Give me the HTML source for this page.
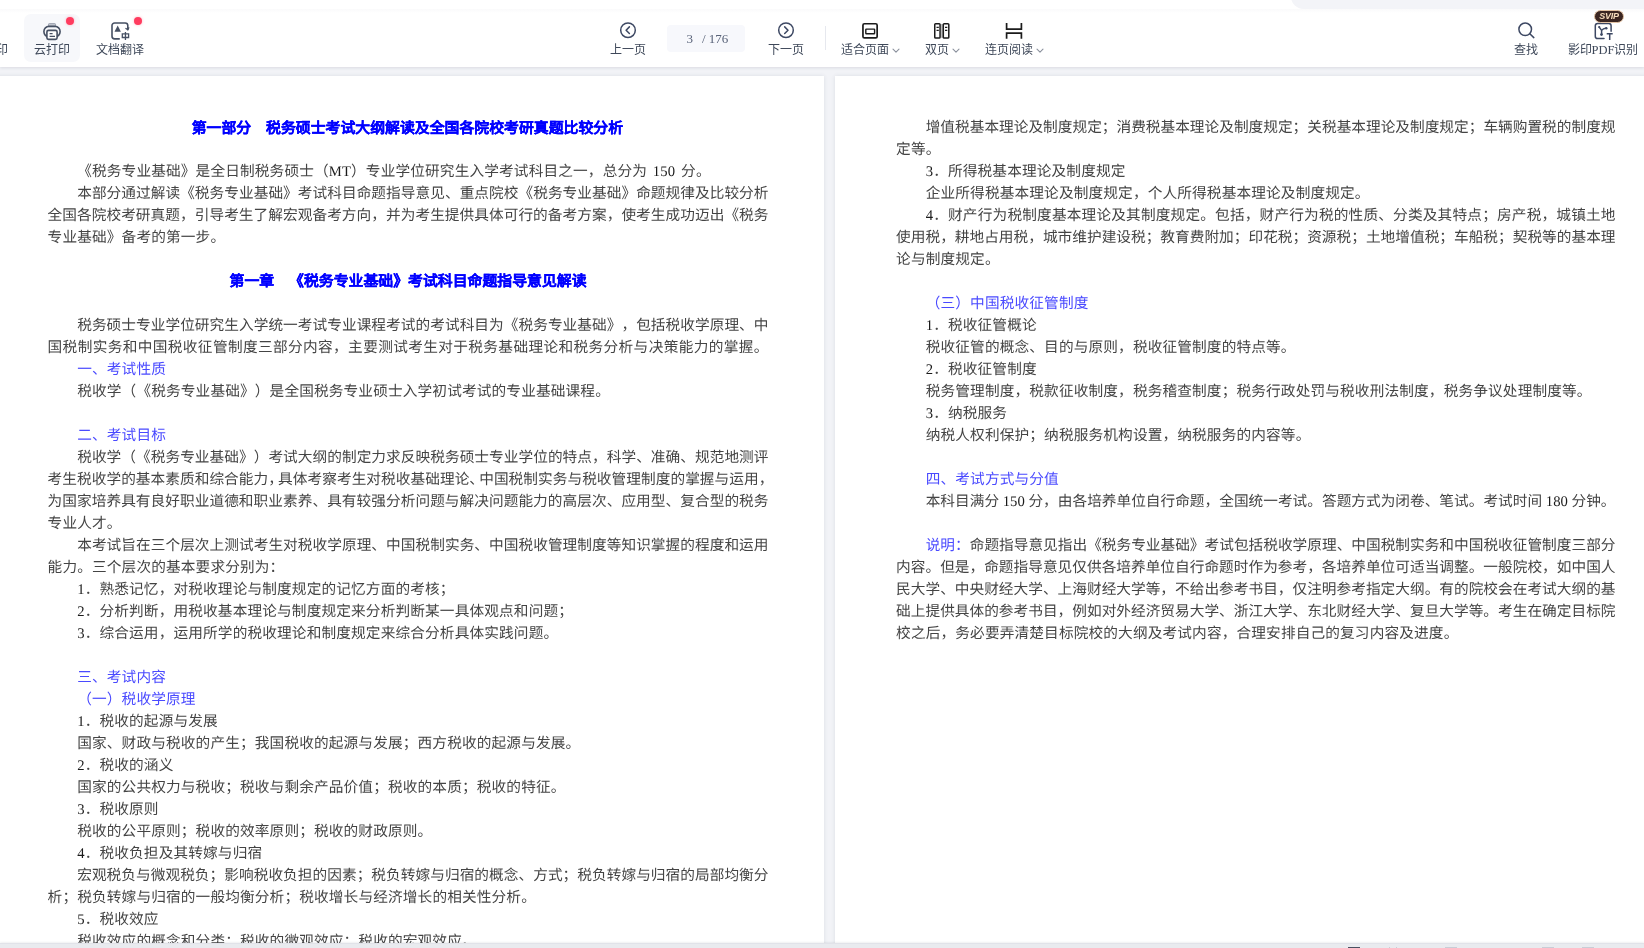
<!DOCTYPE html>
<html lang="zh-CN">
<head>
<meta charset="utf-8">
<title>PDF</title>
<style>
html,body{margin:0;padding:0;}
body{width:1644px;height:948px;overflow:hidden;background:#f2f3f7;font-family:"Liberation Sans",sans-serif;}
#app{position:relative;width:1644px;height:948px;overflow:hidden;background:#f2f3f7;}
.pg{position:absolute;top:76px;height:880px;background:#fff;box-shadow:0 0 4px rgba(60,70,90,.12);}
#pgL{left:-10px;width:834px;}
#pgR{left:835px;width:820px;}
#doc{will-change:transform;position:absolute;left:0;top:0;width:1644px;height:943px;overflow:hidden;font-family:"Liberation Serif",serif;font-size:14.67px;line-height:22px;color:#444;text-spacing-trim:space-all;text-rendering:geometricPrecision;}
.l{position:absolute;white-space:nowrap;height:22px;letter-spacing:0.143px;word-spacing:2px;}
.j{text-align:justify;text-align-last:justify;white-space:nowrap;letter-spacing:0;word-spacing:0;}
.b{color:#4a4aff;}
.n{color:#1a1a1a;}
.l i{font-style:normal;display:inline-block;width:.667em;}
.t{position:absolute;height:22px;text-align:center;white-space:nowrap;font-family:"Liberation Sans",sans-serif;font-weight:bold;color:#0000ff;font-size:14.88px;-webkit-text-stroke:0.25px #0000ff;}
#tb{position:absolute;left:0;top:0;width:1644px;height:67px;background:#fff;box-shadow:0 1px 3px rgba(40,50,70,.12);font-size:12px;color:#3d4757;}
#topstrip{position:absolute;left:1290.5px;top:-15px;width:360px;height:24px;background:#f3f4f8;border-bottom-left-radius:12.5px;}
#topline{position:absolute;left:0;top:9px;width:1644px;height:4px;background:linear-gradient(#fafafb,#fff);}
.hov{position:absolute;left:24px;top:14px;width:56px;height:47.5px;border-radius:7px;background:#f7f8fb;}
.btn{position:absolute;top:0;width:60px;height:67px;}
.btn .ic{position:absolute;}
.lb{position:absolute;left:-20px;width:100px;top:41.9px;height:17px;line-height:17px;text-align:center;white-space:nowrap;font-size:12px;color:#3e4859;}
.lb em{font-style:normal;font-family:"Liberation Serif",serif;font-size:12.5px;}
.lc{text-align:left;}
.cv{display:inline-block;margin-left:2.7px;vertical-align:0.4px;}
.dot{position:absolute;top:17px;width:8px;height:8px;border-radius:50%;background:#ff3c5f;box-shadow:0 0 3px rgba(255,60,95,.35);}
#pbox{position:absolute;left:667px;top:25px;width:78px;height:27px;border-radius:4px;background:#f7f8fc;font-family:"Liberation Serif",serif;font-size:13px;color:#586278;}
#pbox span{position:absolute;top:5px;line-height:17px;white-space:nowrap;}
#sep{position:absolute;left:825px;top:26px;width:1px;height:24px;background:#e6e8ee;}
.svip{position:absolute;left:21px;top:9.9px;width:28px;height:11.6px;border-radius:7px;background:#3b2622;border:1px solid #e3c3a4;text-align:center;line-height:11.6px;}
.svip b{font-size:9px;font-style:italic;color:#f6dcbc;letter-spacing:-0.3px;position:relative;top:-0.5px;}
#status{position:absolute;left:0;top:943px;width:1644px;height:5px;background:#e9ebef;border-top:1px solid #e1e3e9;box-sizing:border-box;box-shadow:0 -1px 2px rgba(40,50,70,.07);}
#status i{position:absolute;top:3px;height:1px;background:#c9cdd6;}
</style>
</head>
<body>
<div id="app">
<div id="pgL" class="pg"></div>
<div id="pgR" class="pg"></div>
<div id="doc">
<div class="t" style="left:47.00px;width:720.90px;top:117.60px">第一部分　税务硕士考试大纲解读及全国各院校考研真题比较分析</div>
<div class="t" style="left:47.60px;width:720.90px;top:270.90px">第一章　《税务专业基础》考试科目命题指导意见解读</div>
<div class="l" style="left:77.20px;top:161.40px;">《税务专业基础》是全日制税务硕士（<span class="n">MT</span>）专业学位研究生入学考试科目之一，总分为 <span class="n">150</span> 分。</div>
<div class="l j" style="left:77.20px;top:183.40px;width:691.30px;">本部分通过解读《税务专业基础》考试科目命题指导意见、重点院校《税务专业基础》命题规律及比较分析</div>
<div class="l j" style="left:47.60px;top:205.40px;width:720.90px;">全国各院校考研真题，引导考生了解宏观备考方向，并为考生提供具体可行的备考方案，使考生成功迈出《税务</div>
<div class="l" style="left:47.60px;top:227.40px;">专业基础》备考的第一步。</div>
<div class="l j" style="left:77.20px;top:315.40px;width:691.30px;">税务硕士专业学位研究生入学统一考试专业课程考试的考试科目为《税务专业基础》，包括税收学原理、中</div>
<div class="l j" style="left:47.60px;top:337.40px;width:720.90px;">国税制实务和中国税收征管制度三部分内容，主要测试考生对于税务基础理论和税务分析与决策能力的掌握。</div>
<div class="l b" style="left:77.20px;top:359.40px;">一、考试性质</div>
<div class="l" style="left:77.20px;top:381.40px;">税收学（《税务专业基础》）是全国税务专业硕士入学初试考试的专业基础课程。</div>
<div class="l b" style="left:77.20px;top:425.40px;">二、考试目标</div>
<div class="l j" style="left:77.20px;top:447.40px;width:691.30px;">税收学（《税务专业基础》）考试大纲的制定力求反映税务硕士专业学位的特点，科学、准确、规范地测评</div>
<div class="l j" style="left:47.60px;top:469.40px;width:720.90px;">考生税收学的基本素质和综合能力<i>，</i>具体考察考生对税收基础理论<i>、</i>中国税制实务与税收管理制度的掌握与运用<i>，</i></div>
<div class="l j" style="left:47.60px;top:491.40px;width:720.90px;">为国家培养具有良好职业道德和职业素养、具有较强分析问题与解决问题能力的高层次、应用型、复合型的税务</div>
<div class="l" style="left:47.60px;top:513.40px;">专业人才。</div>
<div class="l j" style="left:77.20px;top:535.40px;width:691.30px;">本考试旨在三个层次上测试考生对税收学原理、中国税制实务、中国税收管理制度等知识掌握的程度和运用</div>
<div class="l" style="left:47.60px;top:557.40px;">能力。三个层次的基本要求分别为：</div>
<div class="l" style="left:77.20px;top:579.40px;"><span class="n">1</span>．熟悉记忆，对税收理论与制度规定的记忆方面的考核；</div>
<div class="l" style="left:77.20px;top:601.40px;"><span class="n">2</span>．分析判断，用税收基本理论与制度规定来分析判断某一具体观点和问题；</div>
<div class="l" style="left:77.20px;top:623.40px;"><span class="n">3</span>．综合运用，运用所学的税收理论和制度规定来综合分析具体实践问题。</div>
<div class="l b" style="left:77.20px;top:667.40px;">三、考试内容</div>
<div class="l b" style="left:77.20px;top:689.40px;">（一）税收学原理</div>
<div class="l" style="left:77.20px;top:711.40px;"><span class="n">1</span>．税收的起源与发展</div>
<div class="l" style="left:77.20px;top:733.40px;">国家、财政与税收的产生；我国税收的起源与发展；西方税收的起源与发展。</div>
<div class="l" style="left:77.20px;top:755.40px;"><span class="n">2</span>．税收的涵义</div>
<div class="l" style="left:77.20px;top:777.40px;">国家的公共权力与税收；税收与剩余产品价值；税收的本质；税收的特征。</div>
<div class="l" style="left:77.20px;top:799.40px;"><span class="n">3</span>．税收原则</div>
<div class="l" style="left:77.20px;top:821.40px;">税收的公平原则；税收的效率原则；税收的财政原则。</div>
<div class="l" style="left:77.20px;top:843.40px;"><span class="n">4</span>．税收负担及其转嫁与归宿</div>
<div class="l j" style="left:77.20px;top:865.40px;width:691.30px;">宏观税负与微观税负；影响税收负担的因素；税负转嫁与归宿的概念、方式；税负转嫁与归宿的局部均衡分</div>
<div class="l" style="left:47.60px;top:887.40px;">析；税负转嫁与归宿的一般均衡分析；税收增长与经济增长的相关性分析。</div>
<div class="l" style="left:77.20px;top:909.40px;"><span class="n">5</span>．税收效应</div>
<div class="l" style="left:77.20px;top:931.40px;">税收效应的概念和分类；税收的微观效应；税收的宏观效应。</div>
<div class="l j" style="left:925.70px;top:117.40px;width:689.80px;">增值税基本理论及制度规定；消费税基本理论及制度规定；关税基本理论及制度规定；车辆购置税的制度规</div>
<div class="l" style="left:896.10px;top:139.40px;">定等。</div>
<div class="l" style="left:925.70px;top:161.40px;"><span class="n">3</span>．所得税基本理论及制度规定</div>
<div class="l" style="left:925.70px;top:183.40px;">企业所得税基本理论及制度规定，个人所得税基本理论及制度规定。</div>
<div class="l j" style="left:925.70px;top:205.40px;width:689.80px;"><span class="n">4</span>．财产行为税制度基本理论及其制度规定。包括，财产行为税的性质、分类及其特点；房产税，城镇土地</div>
<div class="l j" style="left:896.10px;top:227.40px;width:719.40px;">使用税，耕地占用税，城市维护建设税；教育费附加；印花税；资源税；土地增值税；车船税；契税等的基本理</div>
<div class="l" style="left:896.10px;top:249.40px;">论与制度规定。</div>
<div class="l b" style="left:925.70px;top:293.40px;">（三）中国税收征管制度</div>
<div class="l" style="left:925.70px;top:315.40px;"><span class="n">1</span>．税收征管概论</div>
<div class="l" style="left:925.70px;top:337.40px;">税收征管的概念、目的与原则，税收征管制度的特点等。</div>
<div class="l" style="left:925.70px;top:359.40px;"><span class="n">2</span>．税收征管制度</div>
<div class="l" style="left:925.70px;top:381.40px;">税务管理制度，税款征收制度，税务稽查制度；税务行政处罚与税收刑法制度，税务争议处理制度等。</div>
<div class="l" style="left:925.70px;top:403.40px;"><span class="n">3</span>．纳税服务</div>
<div class="l" style="left:925.70px;top:425.40px;">纳税人权利保护；纳税服务机构设置，纳税服务的内容等。</div>
<div class="l b" style="left:925.70px;top:469.40px;">四、考试方式与分值</div>
<div class="l j" style="left:925.70px;top:491.40px;width:689.80px;">本科目满分 <span class="n">150</span> 分，由各培养单位自行命题，全国统一考试。答题方式为闭卷、笔试。考试时间 <span class="n">180</span> 分钟。</div>
<div class="l j" style="left:925.70px;top:535.40px;width:689.80px;"><span class="b">说明：</span>命题指导意见指出《税务专业基础》考试包括税收学原理、中国税制实务和中国税收征管制度三部分</div>
<div class="l j" style="left:896.10px;top:557.40px;width:719.40px;">内容。但是，命题指导意见仅供各培养单位自行命题时作为参考，各培养单位可适当调整。一般院校，如中国人</div>
<div class="l j" style="left:896.10px;top:579.40px;width:719.40px;">民大学、中央财经大学、上海财经大学等，不给出参考书目，仅注明参考指定大纲。有的院校会在考试大纲的基</div>
<div class="l j" style="left:896.10px;top:601.40px;width:719.40px;">础上提供具体的参考书目，例如对外经济贸易大学、浙江大学、东北财经大学、复旦大学等。考生在确定目标院</div>
<div class="l" style="left:896.10px;top:623.40px;">校之后，务必要弄清楚目标院校的大纲及考试内容，合理安排自己的复习内容及进度。</div>
</div>
<div id="tb">
<div id="topline"></div>
<div id="topstrip"></div>
<div class="hov"></div>
<div class="btn" style="left:0"><span class="lb" style="left:-15.8px;width:24px;text-align:left">打印</span></div>
<div class="btn" style="left:22px"><svg class="ic" width="20" height="20" viewBox="0 0 20 20" style="left:20px;top:21px"><rect x="6.5" y="2.6" width="7" height="3" rx="0.8" fill="#c3c7d0" stroke="#8d94a3" stroke-width="0.8"/><rect x="1.9" y="5.4" width="16.2" height="10.4" rx="5" fill="none" stroke="#465063" stroke-width="1.6"/><rect x="4.9" y="9.4" width="10.2" height="9" rx="1.6" fill="#fff" stroke="#465063" stroke-width="1.6"/><path d="M7.6 12.6h3M7.6 15.4h5.4" stroke="#465063" stroke-width="1.3" fill="none"/></svg><span class="dot" style="left:44px"></span><span class="lb">云打印</span></div>
<div class="btn" style="left:90px"><svg class="ic" width="20" height="20" viewBox="0 0 20 20" style="left:20px;top:21px"><path d="M9.2 17.9H4.6a2.6 2.6 0 0 1-2.6-2.6V4.6A2.6 2.6 0 0 1 4.6 2h10.6a2.6 2.6 0 0 1 2.6 2.6v4" fill="none" stroke="#465063" stroke-width="1.6" stroke-linecap="round"/><path d="M15.9 7.5l1.9 1.3 1-2" fill="none" stroke="#465063" stroke-width="1.3" stroke-linecap="round" stroke-linejoin="round"/><path d="M7.7 4.6l3.2 6.2H4.5z" fill="#465063"/><path d="M12.3 12.9h6.3v3.6h-6.3zM15.45 11v8" fill="none" stroke="#465063" stroke-width="1.3"/></svg><span class="dot" style="left:44px"></span><span class="lb">文档翻译</span></div>

<div class="btn" style="left:597.5px"><svg class="ic" width="20" height="20" viewBox="0 0 20 20" style="left:20px;top:20px"><circle cx="10" cy="10.2" r="7.3" fill="none" stroke="#3d4863" stroke-width="1.5"/><path d="M11.4 6.9L8.1 10.2l3.3 3.3" fill="none" stroke="#3d4863" stroke-width="1.5" stroke-linecap="round" stroke-linejoin="round"/></svg><span class="lb">上一页</span></div>
<div id="pbox"><span style="left:19.6px">3</span><span style="left:35px">/ 176</span></div>
<div class="btn" style="left:755.5px"><svg class="ic" width="20" height="20" viewBox="0 0 20 20" style="left:20px;top:20px"><circle cx="10" cy="10.2" r="7.3" fill="none" stroke="#3d4863" stroke-width="1.5"/><path d="M8.7 6.9l3.3 3.3-3.3 3.3" fill="none" stroke="#3d4863" stroke-width="1.5" stroke-linecap="round" stroke-linejoin="round"/></svg><span class="lb">下一页</span></div>
<div id="sep"></div>

<div class="btn" style="left:840px"><svg class="ic" width="20" height="20" viewBox="0 0 20 20" style="left:20px;top:21px"><rect x="2.95" y="2.75" width="14.2" height="14.2" rx="1.5" fill="none" stroke="#1b1b1b" stroke-width="1.7"/><rect x="5.8" y="8.1" width="8.8" height="4.6" rx="0.5" fill="none" stroke="#1b1b1b" stroke-width="1.4"/></svg><span class="lb lc" style="left:1px">适合页面<svg class="cv" width="8" height="6" viewBox="0 0 8 6"><path d="M1 1.2l3 3 3-3" fill="none" stroke="#8b919d" stroke-width="1.1" stroke-linecap="round" stroke-linejoin="round"/></svg></span></div>
<div class="btn" style="left:912px"><svg class="ic" width="20" height="20" viewBox="0 0 20 20" style="left:20px;top:21px"><rect x="8.6" y="3" width="2.4" height="13.8" fill="#bdbdbd"/><rect x="2.75" y="2.65" width="5.3" height="14.4" rx="0.9" fill="#fff" stroke="#1b1b1b" stroke-width="1.5"/><rect x="11.3" y="2.65" width="5.5" height="14.4" rx="0.9" fill="#fff" stroke="#1b1b1b" stroke-width="1.5"/><path d="M4.5 6.4h2.3M4.5 9.3h2.3M13 6.4h2.3M13 9.3h2.3" stroke="#1b1b1b" stroke-width="1.3" fill="none"/></svg><span class="lb lc" style="left:13px">双页<svg class="cv" width="8" height="6" viewBox="0 0 8 6"><path d="M1 1.2l3 3 3-3" fill="none" stroke="#8b919d" stroke-width="1.1" stroke-linecap="round" stroke-linejoin="round"/></svg></span></div>
<div class="btn" style="left:984px"><svg class="ic" width="20" height="20" viewBox="0 0 20 20" style="left:20px;top:21px"><path d="M2.6 1.9v6.3h14.8V1.9M2.6 17.8v-5.7h14.8v5.7" fill="none" stroke="#1b1b1b" stroke-width="1.7"/></svg><span class="lb lc" style="left:1px">连页阅读<svg class="cv" width="8" height="6" viewBox="0 0 8 6"><path d="M1 1.2l3 3 3-3" fill="none" stroke="#8b919d" stroke-width="1.1" stroke-linecap="round" stroke-linejoin="round"/></svg></span></div>

<div class="btn" style="left:1496px"><svg class="ic" width="20" height="20" viewBox="0 0 20 20" style="left:20px;top:20px"><circle cx="9.2" cy="9.3" r="6.3" fill="none" stroke="#3d4863" stroke-width="1.5"/><path d="M13.8 13.8l4 3.8" fill="none" stroke="#3d4863" stroke-width="1.5" stroke-linecap="round"/></svg><span class="lb">查找</span></div>
<div class="btn" style="left:1573px"><svg class="ic" width="22" height="20" viewBox="0 0 22 20" style="left:20px;top:21px"><path d="M11 17.6H4.7a2.4 2.4 0 0 1-2.4-2.4V4.8a2.4 2.4 0 0 1 2.4-2.4h11a2.4 2.4 0 0 1 2.4 2.4v5.4" fill="none" stroke="#3d4863" stroke-width="1.5" stroke-linecap="round"/><path d="M8.6 13.2V9.4M8.6 9.4L6.4 6.4M8.6 9.4c1.2-1.6 2.8-2.4 4.6-2.2" fill="none" stroke="#3d4863" stroke-width="1.5" stroke-linecap="round"/><circle cx="8.5" cy="13.6" r="1.35" fill="#3d4863"/><circle cx="6.2" cy="6.1" r="1.1" fill="#3d4863"/><circle cx="13.3" cy="7.3" r="1.2" fill="#3d4863"/><path d="M13.7 12.8h6M16.7 12.8v6.3" fill="none" stroke="#3d4863" stroke-width="1.5"/></svg><span class="svip"><b>SVIP</b></span><span class="lb">影印<em>PDF</em>识别</span></div>
</div>

<div id="status"><i style="left:1348px;width:12px;background:#4a5060"></i><i style="left:1389px;width:1px"></i><i style="left:1396px;width:1px"></i><i style="left:1445px;width:12px"></i><i style="left:1542px;width:12px"></i><i style="left:1582px;width:12px"></i></div>
</div>
</body>
</html>
